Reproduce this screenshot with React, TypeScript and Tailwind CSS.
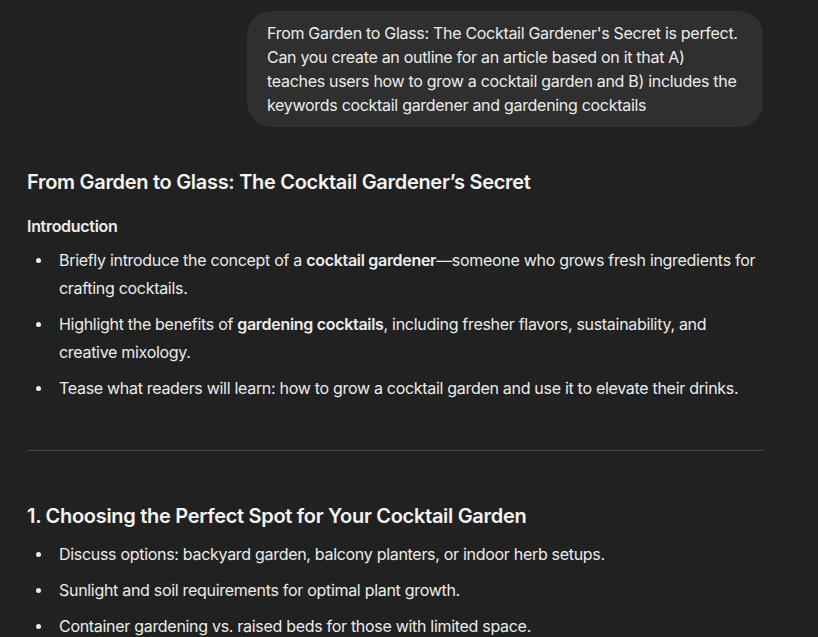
import React from 'react';

const Dot = () => (
    <span className="w-[32px] shrink-0 flex justify-start pl-[9px] pt-[12px]">
        <span className="block w-[5px] h-[5px] rounded-full bg-[#ececec]" />
    </span>
);

const Item: React.FC<{ children: React.ReactNode }> = ({ children }) => (
    <li className="flex">
        <Dot />
        <span className="flex-1">{children}</span>
    </li>
);

export default function App() {
    return (
        <div
            className="min-h-screen w-full bg-[#212121] text-[#ececec] overflow-hidden tracking-[-0.3px]"
            style={{ fontFamily: 'Inter, "Noto Sans", sans-serif' }}
        >
            <div className="w-[736px] ml-[27px] pt-[11px]">
                {/* User message */}
                <div className="flex justify-end">
                    <div className="w-[516px] bg-[#2f2f2f] rounded-[24px] px-[20px] py-[10px] text-[16px] leading-[24px]">
                        From Garden to Glass: The Cocktail Gardener's Secret is perfect. Can you create an outline for an article based on it that A) teaches users how to grow a cocktail garden and B) includes the keywords cocktail gardener and gardening cocktails
                    </div>
                </div>

                {/* Assistant reply */}
                <div className="text-[16px] leading-[28px]">
                    <h2 className="mt-[41px] text-[20px] leading-[28px] font-semibold text-[#f4f4f4]">
                        From Garden to Glass: The Cocktail Gardener’s Secret
                    </h2>
                    <h3 className="mt-[18px] text-[16px] leading-[24px] font-semibold">Introduction</h3>
                    <ul className="mt-[8px] flex flex-col gap-[8px]">
                        <Item>
                            Briefly introduce the concept of a <strong className="font-semibold">cocktail gardener</strong>—someone who grows fresh ingredients for crafting cocktails.
                        </Item>
                        <Item>
                            Highlight the benefits of <strong className="font-semibold">gardening cocktails</strong>, including fresher flavors, sustainability, and creative mixology.
                        </Item>
                        <Item>
                            Tease what readers will learn: how to grow a cocktail garden and use it to elevate their drinks.
                        </Item>
                    </ul>

                    <hr className="mt-[48px] border-0 h-px bg-[#4a4a4a]" />

                    <h2 className="mt-[51px] text-[20px] leading-[28px] font-semibold text-[#f4f4f4]">
                        1. Choosing the Perfect Spot for Your Cocktail Garden
                    </h2>
                    <ul className="mt-[10px] flex flex-col gap-[8px]">
                        <Item>Discuss options: backyard garden, balcony planters, or indoor herb setups.</Item>
                        <Item>Sunlight and soil requirements for optimal plant growth.</Item>
                        <Item>Container gardening vs. raised beds for those with limited space.</Item>
                    </ul>
                </div>
            </div>
        </div>
    );
}
